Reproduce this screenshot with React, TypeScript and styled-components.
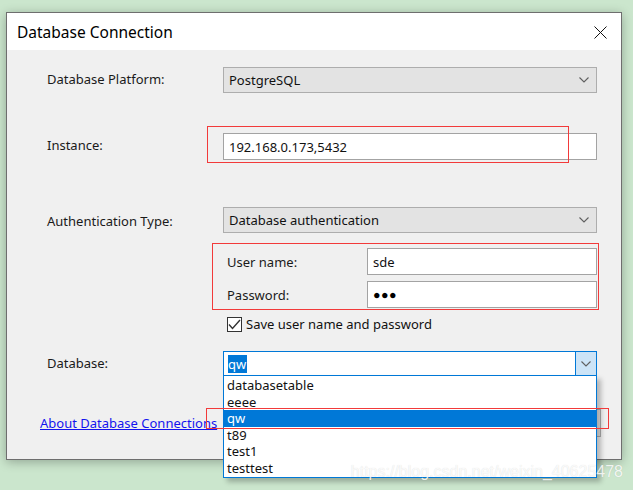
import styled, { createGlobalStyle } from "styled-components"

const GlobalStyle = createGlobalStyle`
  html, body {
    margin: 0;
    padding: 0;
    background: #cbe6cd;
  }
  body {
    font-family: "Noto Sans", "Open Sans", sans-serif;
    font-size: 13px;
    color: #000;
  }
`

const databases = ["databasetable", "eeee", "qw", "t89", "test1", "testtest"]

const Chevron = () => (
  <svg width="10" height="6" viewBox="0 0 10 6" aria-hidden="true">
    <path d="M0.5 0.5 L5 5 L9.5 0.5" fill="none" stroke="#5f5f5f" strokeWidth="1.1" />
  </svg>
)

const App = () => {
  return (
    <Desktop>
      <GlobalStyle />
      <Dialog>
        <TitleBar>
          <Title>Database Connection</Title>
          <CloseButton type="button" aria-label="Close">
            <svg width="13" height="13" viewBox="0 0 13 13" aria-hidden="true">
              <path d="M0.5 0.5 L12.5 12.5 M12.5 0.5 L0.5 12.5" stroke="#111" strokeWidth="1" />
            </svg>
          </CloseButton>
        </TitleBar>
        <Body>
          <Row $top={17}>
            <Label $shift={-3}>Database Platform:</Label>
            <Combo>
              <span>PostgreSQL</span>
              <Chevron />
            </Combo>
          </Row>
          <Row $top={40}>
            <Label $shift={-4}>Instance:</Label>
            <Field $tall>192.168.0.173,5432</Field>
            <Mark style={{ left: 160, top: -7, width: 362, height: 37 }} />
          </Row>
          <Row $top={48}>
            <Label $shift={2}>Authentication Type:</Label>
            <Combo>
              <span>Database authentication</span>
              <Chevron />
            </Combo>
          </Row>
          <Credentials>
            <CredRow>
              <SubLabel>User name:</SubLabel>
              <Field $tall>sde</Field>
            </CredRow>
            <CredRow>
              <SubLabel>Password:</SubLabel>
              <Field $tall>
                <Dots>●●●</Dots>
              </Field>
            </CredRow>
            <Mark style={{ left: -11, top: -5, width: 387, height: 67 }} />
          </Credentials>
          <CheckRow>
            <CheckBox>
              <svg width="13" height="11" viewBox="0 0 13 11" aria-hidden="true">
                <path d="M1 5.5 L4.5 9.5 L12 1" fill="none" stroke="#333" strokeWidth="1.4" />
              </svg>
            </CheckBox>
            <span>Save user name and password</span>
          </CheckRow>
          <Row $top={19} $height={25}>
            <Label $shift={-2}>Database:</Label>
            <EditCombo>
              <EditText>
                <Selected>qw</Selected>
              </EditText>
              <DropButton>
                <Chevron />
              </DropButton>
              <DropList>
                {databases.map((name) => (
                  <DropItem key={name} $active={name === "qw"}>
                    {name}
                  </DropItem>
                ))}
              </DropList>
            </EditCombo>
          </Row>
          <Footer>
            <HelpLink href="#">About Database Connections</HelpLink>
            <PushButton type="button">OK</PushButton>
          </Footer>
          <Mark style={{ left: 199, top: 358, width: 403, height: 21 }} />
        </Body>
      </Dialog>
      <Watermark>https://blog.csdn.net/weixin_40625478</Watermark>
    </Desktop>
  )
}

const Desktop = styled.div`
  position: relative;
  width: 633px;
  height: 490px;
  padding: 12px 0 0 6px;
  box-sizing: border-box;
  overflow: hidden;
  background: #cbe6cd;
`

const Dialog = styled.div`
  width: 616px;
  height: 448px;
  box-sizing: border-box;
  border: 1px solid #6e6e6e;
  background: #f0f0f0;
  box-shadow: 0 2px 10px rgba(0, 0, 0, 0.28);
  display: flex;
  flex-direction: column;
`

const TitleBar = styled.div`
  height: 37px;
  background: #fff;
  display: flex;
  align-items: center;
  justify-content: space-between;
  padding: 0 14px 0 10px;
  flex-shrink: 0;
`

const Title = styled.div`
  font-size: 15.5px;
  color: #000;
`

const CloseButton = styled.button`
  border: 0;
  padding: 0;
  background: none;
  display: flex;
  margin-top: 1px;
`

const Body = styled.div`
  position: relative;
  flex: 1;
  display: flex;
  flex-direction: column;
  padding: 0 24px 0 40px;
`

const Row = styled.div<{ $top: number; $height?: number }>`
  position: relative;
  display: grid;
  grid-template-columns: 176px 374px;
  align-items: center;
  height: ${(p) => p.$height ?? 26}px;
  margin-top: ${(p) => p.$top}px;
`

const Label = styled.div<{ $shift?: number }>`
  font-size: 13px;
  color: #1a1a1a;
  margin-top: ${(p) => p.$shift ?? 0}px;
`

const Combo = styled.div`
  height: 26px;
  box-sizing: border-box;
  border: 1px solid #adadad;
  background: #e3e3e3;
  display: flex;
  align-items: center;
  justify-content: space-between;
  padding: 0 7px 0 5px;
  font-size: 13px;
  color: #111;
`

const Field = styled.div<{ $tall?: boolean }>`
  height: ${(p) => (p.$tall ? 27 : 26)}px;
  box-sizing: border-box;
  border: 1px solid #a3a3a3;
  background: #fff;
  display: flex;
  align-items: center;
  padding: 0 5px;
  font-size: 13px;
  color: #111;
`

const Dots = styled.span`
  font-size: 12.5px;
  letter-spacing: 0.5px;
  color: #000;
`

const Credentials = styled.div`
  position: relative;
  margin: 15px 0 0 176px;
  width: 374px;
  display: flex;
  flex-direction: column;
  gap: 6px;
`

const CredRow = styled.div`
  display: grid;
  grid-template-columns: 144px 230px;
  align-items: center;
`

const SubLabel = styled.div`
  padding-left: 4px;
  font-size: 13px;
  color: #1a1a1a;
`

const CheckRow = styled.div`
  margin: 8px 0 0 180px;
  display: flex;
  align-items: center;
  gap: 4px;
  height: 16px;
  font-size: 13px;
  color: #111;
`

const CheckBox = styled.span`
  width: 15px;
  height: 15px;
  box-sizing: border-box;
  border: 1px solid #333;
  background: #fff;
  display: flex;
  align-items: center;
  justify-content: center;
`

const EditCombo = styled.div`
  position: relative;
  height: 25px;
  box-sizing: border-box;
  border: 1px solid #0078d7;
  background: #fff;
  display: flex;
`

const EditText = styled.div`
  flex: 1;
  display: flex;
  align-items: center;
  padding-left: 4px;
`

const Selected = styled.span`
  background: #0078d7;
  color: #fff;
  font-size: 13px;
  line-height: 18px;
  padding-right: 1px;
`

const DropButton = styled.div`
  width: 20px;
  border-left: 1px solid #0078d7;
  background: #cce4f7;
  display: flex;
  align-items: center;
  justify-content: center;
`

const DropList = styled.div`
  position: absolute;
  top: 23px;
  left: -1px;
  right: -1px;
  z-index: 5;
  box-sizing: border-box;
  border: 1px solid #0078d7;
  background: #fff;
  padding: 1px 0;
  box-shadow: 4px 4px 5px rgba(0, 0, 0, 0.25);
`

const DropItem = styled.div<{ $active?: boolean }>`
  height: 16.5px;
  line-height: 16px;
  padding-left: 3px;
  font-size: 13px;
  color: ${(p) => (p.$active ? "#fff" : "#111")};
  background: ${(p) => (p.$active ? "#0078d7" : "transparent")};
`

const Footer = styled.div`
  margin: 33px 0 0 -7px;
  margin-right: -4px;
  display: flex;
  align-items: center;
  justify-content: space-between;
  height: 28px;
`

const HelpLink = styled.a`
  font-size: 13px;
  color: #1414ee;
  text-decoration: underline;
`

const PushButton = styled.button`
  width: 76px;
  height: 28px;
  border: 1px solid #adadad;
  background: #e1e1e1;
  font-family: inherit;
  font-size: 13px;
`

const Mark = styled.div`
  position: absolute;
  box-sizing: border-box;
  border: 1px solid #f23a3a;
  pointer-events: none;
  z-index: 10;
`

const Watermark = styled.div`
  position: absolute;
  right: 10px;
  bottom: 9px;
  font-family: "Liberation Sans", Arial, sans-serif;
  font-size: 16px;
  color: rgba(255, 255, 255, 0.85);
  text-shadow: 0 0 1px rgba(0, 0, 0, 0.15);
  z-index: 20;
`

export default App
